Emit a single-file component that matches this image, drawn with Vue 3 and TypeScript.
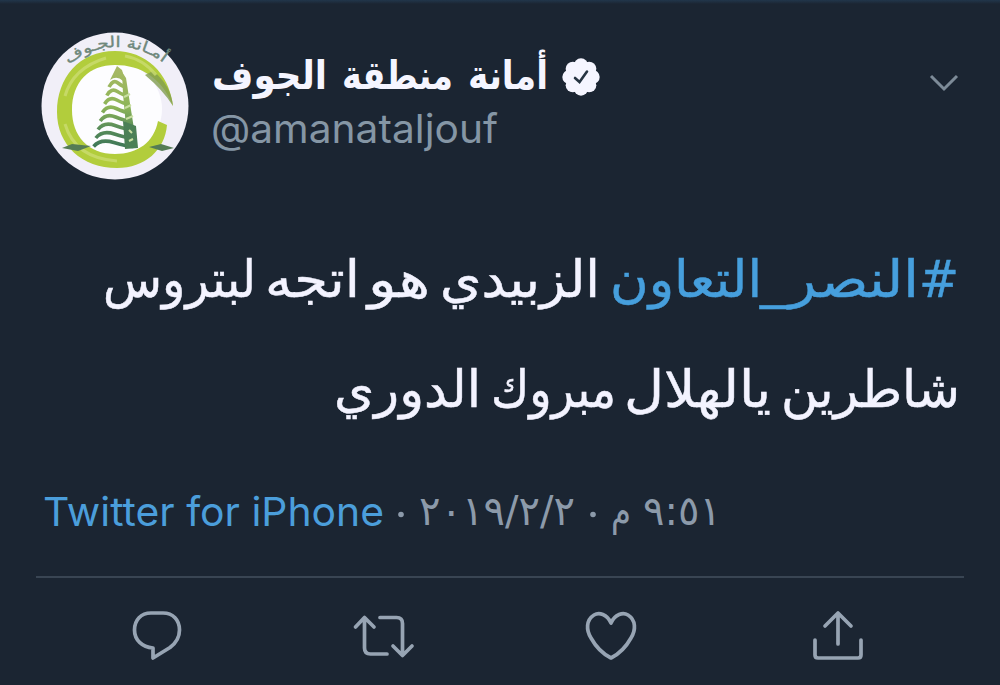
<script setup lang="ts">
interface Word {
  text: string
  x: number
  w: number
  y: number
  link?: boolean
}

const nameWords: Word[] = [
  { text: 'أمانة', x: 256, w: 80, y: 49 },
  { text: 'منطقة', x: 130, w: 111, y: 49 },
  { text: 'الجوف', x: 0, w: 115, y: 49 },
]

const bodyLines: Word[][] = [
  [
    { text: '#', x: 919, w: 40, y: 57, link: true },
    { text: 'النصر', x: 789, w: 130, y: 57, link: true },
    { text: '_', x: 760, w: 30, y: 57, link: true },
    { text: 'التعاون', x: 610, w: 152, y: 57, link: true },
    { text: 'الزبيدي', x: 440, w: 160, y: 57 },
    { text: 'هو', x: 368, w: 62, y: 57 },
    { text: 'اتجه', x: 265, w: 95, y: 57 },
    { text: 'لبتروس', x: 103, w: 153, y: 57 },
  ],
  [
    { text: 'شاطرين', x: 781, w: 179, y: 58 },
    { text: 'يالهلال', x: 624, w: 147, y: 58 },
    { text: 'مبروك', x: 491, w: 125, y: 58 },
    { text: 'الدوري', x: 334, w: 147, y: 58 },
  ],
]

const metaWords: Word[] = [
  { text: '٢٠١٩/٢/٢', x: 419, w: 156, y: 45 },
  { text: 'م', x: 611, w: 20, y: 45 },
  { text: '٩:٥١', x: 643, w: 78, y: 45 },
]

const tiers = [0, 1, 2, 3, 4, 5, 6, 7]
</script>

<template>
  <article class="tweet">
    <header class="head">
      <svg class="avatar" viewBox="0 0 148 148">
        <defs>
          <path id="arc" d="M26 34 A76 76 0 0 1 124 32" />
          <linearGradient id="tower" gradientUnits="userSpaceOnUse" x1="0" y1="34" x2="0" y2="116">
            <stop offset="0" stop-color="#a9b965" />
            <stop offset=".5" stop-color="#8db558" />
            <stop offset=".75" stop-color="#5b8e5a" />
            <stop offset="1" stop-color="#3c7657" />
          </linearGradient>
        </defs>
        <circle cx="74" cy="74" r="73.5" fill="#f1eff8" />
        <circle cx="75" cy="77" r="46" fill="#fdfdff" />
        <path d="M132 74C128 40 104 19 74 19C38 19 16 46 16 80C16 113 41 136 76 136C104 136 124 118 126 93L117 89C113 110 97 122 74 122C47 122 31 104 31 78C31 50 48 33 74 33C100 33 121 46 132 74Z" fill="#b2cd3c" />
        <path d="M112 39Q130 53 132 74Q122 58 104 43Z" fill="#829d50" opacity=".8" />
        <path d="M24 64Q32 36 65 26M24 92Q34 126 76 129M84 24Q102 27 115 43" fill="none" stroke="#cbdc70" stroke-width="3" opacity=".8" />
        <path d="M21 116L31 112L50 114L37 119ZM108 115L120 112L133 116L121 119Z" fill="#557c55" />
        <g fill="none" stroke="url(#tower)" stroke-width="3.600">
          <path
            v-for="i in tiers"
            :key="i"
            :d="`M${68 - i * 2.2} ${55 + i * 8.5}Q${72 - i * 1.8} ${47 + i * 8.5} ${77 - i * .6} ${51 + i * 8.5}T${86 + i * .9} ${55 + i * 8.5}`"
          />
        </g>
        <path d="M76 34L69 48Q76 43 82 49L84 48L81 38Z" fill="url(#tower)" />
        <path d="M81 40L85 46L96 116L87 116L82 62Z" fill="url(#tower)" />
        <path d="M82 89L95 94L97 116L84 117Z" fill="#4b8056" />
        <path d="M83 65L89 62M84 76L90 73M85 87L92 84M88 98L91 101M88 109L92 107" stroke="#c9dfa2" stroke-width="2" />
        <text class="seal"><textPath href="#arc" startOffset="50%" text-anchor="middle" textLength="102" lengthAdjust="spacingAndGlyphs">أمـانة الجـوف</textPath></text>
      </svg>
      <div class="identity">
        <svg class="name" viewBox="0 0 400 66">
          <text v-for="w in nameWords" :key="w.text" :x="w.x + w.w / 2" :y="w.y" :textLength="w.w" lengthAdjust="spacingAndGlyphs">{{ w.text }}</text>
          <g transform="translate(369 37)">
            <g fill="#f5f5ff">
              <circle r="15.500" />
              <circle v-for="a in tiers" :key="a" :cx="11.5 * Math.cos(a * Math.PI / 4)" :cy="11.5 * Math.sin(a * Math.PI / 4)" r="7.200" />
            </g>
            <path d="M-6 1L-1.500 5L6 -5.500" fill="none" stroke="#263442" stroke-width="2.600" stroke-linecap="round" />
          </g>
        </svg>
        <svg class="handle" viewBox="0 0 400 50">
          <text x="-1" y="37" textLength="287" lengthAdjust="spacingAndGlyphs">@amanataljouf</text>
        </svg>
      </div>
      <svg class="chevron" viewBox="0 0 32 20"><path d="M3 3L16 16L29 3" /></svg>
    </header>

    <section class="body">
      <svg v-for="(line, n) in bodyLines" :key="n" class="line" viewBox="0 0 1000 109">
        <text v-for="w in line" :key="w.text" :class="{ link: w.link }" :x="w.x + w.w / 2" :y="w.y" :textLength="w.w" lengthAdjust="spacingAndGlyphs">{{ w.text }}</text>
      </svg>
    </section>

    <svg class="meta" viewBox="0 0 1000 96">
      <text class="source" x="43" y="46" textLength="341" lengthAdjust="spacingAndGlyphs">Twitter for iPhone</text>
      <circle cx="401" cy="34.500" r="2.800" />
      <text v-for="w in metaWords" :key="w.text" class="date" :x="w.x + w.w / 2" :y="w.y" :textLength="w.w" lengthAdjust="spacingAndGlyphs">{{ w.text }}</text>
      <circle cx="593" cy="34.500" r="2.800" />
    </svg>

    <footer class="actions">
      <svg viewBox="0 0 64 60"><path d="M26 11H38C48 11 54.500 18 54.500 28C54.500 36 51 41 45 45.500L28 56V46C17 45 9.500 38 9.500 28C9.500 18 16 11 26 11Z" /></svg>
      <svg viewBox="0 0 64 60"><path d="M3.500 25L12.500 15.500L22 25M12.500 16V46Q12.500 52 18.500 52H35M28 15.500H44.500Q50.500 15.500 50.500 21.500V52M41 44L50.500 53.500L60 44" /></svg>
      <svg viewBox="0 0 64 60"><path d="M32 21C28 12 20 10 15 13C7 18 7 28 12 36C17 45 24 52 32 56C40 52 47 45 52 36C57 28 57 18 49 13C44 10 36 12 32 21Z" /></svg>
      <svg viewBox="0 0 64 60"><path d="M32 42V12M19 24L32 11L45 24M9 38V53Q9 56 12 56H52Q55 56 55 53V38" /></svg>
    </footer>
  </article>
</template>

<style>
body { margin: 0; background: #1b2532; }
</style>

<style scoped>
.tweet {
  width: 1000px;
  height: 685px;
  overflow: hidden;
  box-sizing: border-box;
  padding-top: 32px;
  display: flex;
  flex-direction: column;
  background: linear-gradient(#21364b, #1b2532 4px);
}
svg { display: block; flex: none; overflow: visible; }
.head { display: flex; height: 208px; padding: 0 40px 0 41px; }
.avatar { width: 148px; height: 148px; }
.seal { font: 15px "DejaVu Sans", sans-serif; fill: #6f887c; stroke: #6f887c; stroke-width: .4; }
.identity { margin-left: 23px; display: flex; flex-direction: column; padding-top: 8px; }
.name { width: 400px; height: 66px; }
.name text { font: bold 40px "DejaVu Sans", sans-serif; fill: #f5f5ff; text-anchor: middle; }
.handle { width: 400px; height: 50px; }
.handle text { font: 40px Inter, sans-serif; fill: #8596a5; }
.chevron { width: 32px; height: 20px; margin: 41px 0 0 auto; }
.chevron path { fill: none; stroke: #7d8b98; stroke-width: 3; }
.body { display: flex; flex-direction: column; }
.line { width: 1000px; height: 109px; }
.line text { font: 51px "DejaVu Sans", sans-serif; fill: #f3f3ff; stroke: #f3f3ff; stroke-width: .5; text-anchor: middle; }
.line text.link { fill: #469fdd; stroke: #469fdd; }
.meta { width: 1000px; height: 96px; margin-top: 22px; }
.meta .source { font: 40px Inter, sans-serif; fill: #4b9edb; }
.meta .date { font: 41px "DejaVu Sans", sans-serif; fill: #8c9aaa; text-anchor: middle; }
.meta circle { fill: #8c9aaa; }
.actions {
  margin: 0 36px;
  border-top: 2px solid #394553;
  height: 107px;
  display: grid;
  grid-template-columns: repeat(4, 227px);
  padding: 24px 0 0 89px;
  box-sizing: border-box;
}
.actions svg { width: 64px; height: 60px; }
.actions path { fill: none; stroke: #97a4b3; stroke-width: 3.7; stroke-linecap: round; stroke-linejoin: round; }
</style>
